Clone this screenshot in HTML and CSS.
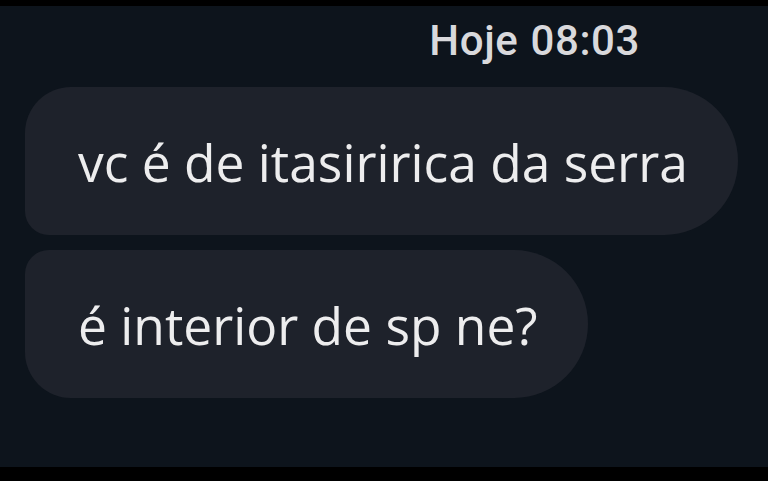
FILE: index.html
```html
<!DOCTYPE html>
<html lang="pt">

<head>
    <meta charset="UTF-8">
    <meta name="viewport" content="width=device-width, initial-scale=1">
    <title>Conversa</title>
    <link rel="stylesheet" href="styles.css">
</head>

<body>
    <div class="screen">
        <div class="stamp"><b>Hoje</b> 08:03</div>

        <div class="thread">
            <div class="bubble first">vc é de itasiririca da serra</div>
            <div class="bubble last">é interior de sp ne?</div>
        </div>
    </div>
</body>

</html>
```

FILE: styles.css
```css
html {
    background-color: #000;
}

body {
    margin: 0;
    font-family: "Open Sans", Arial, sans-serif;
}

/* dark chat area between the black strips */
.screen {
    margin-top: 6px;
    height: 461px;
    background-color: #0d141c;
    overflow: hidden;
}

.stamp {
    display: flex;
    justify-content: flex-end;
    gap: 12px;
    padding: 10px 128px 0 0;
    height: 81px;
    box-sizing: border-box;
    font-family: Roboto, sans-serif;
    font-size: 42px;
    font-weight: 500;
    letter-spacing: 0.6px;
    color: #d9d9dc;
}

.stamp b {
    font-weight: 500;
}

.thread {
    display: flex;
    flex-direction: column;
    align-items: flex-start;
    gap: 15px;
    padding: 0 0 0 25px;
}

.bubble {
    display: flex;
    align-items: center;
    height: 148px;
    box-sizing: border-box;
    padding: 2px 50px 0 53px;
    background-color: #1e222b;
    color: #ededee;
    font-size: 51.5px;
    border-radius: 74px;
}

.bubble.first {
    border-top-left-radius: 46px;
    border-bottom-left-radius: 24px;
}

.bubble.last {
    border-top-left-radius: 24px;
    border-bottom-left-radius: 46px;
}
```
